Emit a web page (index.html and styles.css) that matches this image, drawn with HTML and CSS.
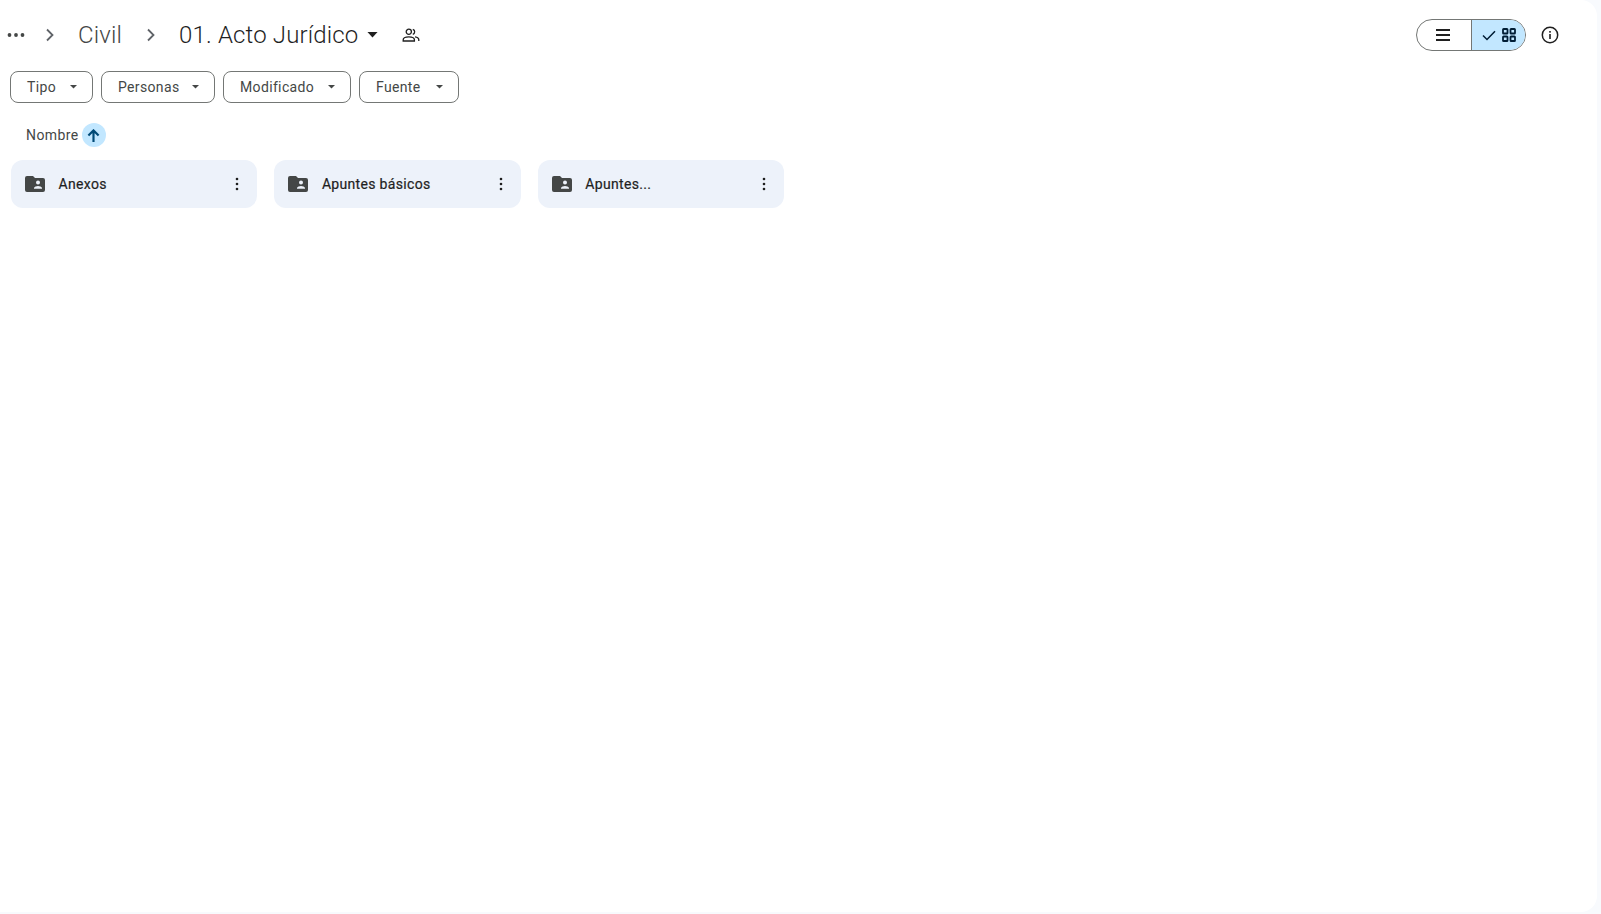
FILE: index.html
```html
<!DOCTYPE html>
<html lang="es">
<head>
<meta charset="utf-8">
<title>01. Acto Jurídico</title>
<link rel="stylesheet" href="styles.css">
</head>
<body>
<main class="panel">
  <header class="topbar">
    <nav class="crumbs">
      <svg class="more" viewBox="0 0 18 4" width="18" height="4"><circle cx="2.5" cy="2" r="1.9"/><circle cx="9" cy="2" r="1.9"/><circle cx="15.5" cy="2" r="1.9"/></svg>
      <svg class="chev chev-a" viewBox="0 0 10 14" width="10" height="14"><path d="M2 1.5 7.5 7 2 12.5"/></svg>
      <span class="crumb">Civil</span>
      <svg class="chev chev-b" viewBox="0 0 10 14" width="10" height="14"><path d="M2 1.5 7.5 7 2 12.5"/></svg>
      <span class="crumb current">01. Acto Jurídico</span>
      <svg class="caret-big" viewBox="0 0 12 6" width="11" height="5.500"><path d="M0.5 0h11L6 6z"/></svg>
      <svg class="people" viewBox="0 0 18 14" width="18" height="14"><circle cx="6.8" cy="3.8" r="2.6"/><path d="M1.2 13v-1.3c0-1.7 2.4-2.9 5.6-2.9s5.6 1.200 5.600 2.900V13z"/><path d="M10.800 1.300a2.600 2.600 0 0 1 0 5"/><path d="M13 8.900c2.300.4 3.800 1.400 3.800 2.800V13"/></svg>
    </nav>
    <div class="actions">
      <div class="toggle">
        <span class="seg seg-list">
          <svg viewBox="0 0 14 12" width="14" height="12"><path d="M0 1h14M0 6h14M0 11h14"/></svg>
        </span>
        <span class="seg seg-grid">
          <svg class="check" viewBox="0 0 14 11" width="14" height="11"><path d="M1 5.500 5 9.500 13 1.200"/></svg>
          <svg class="grid" viewBox="0 0 14 14" width="14" height="14"><rect x="1" y="1" width="4.500" height="4.500" rx=".6"/><rect x="8.500" y="1" width="4.500" height="4.500" rx=".6"/><rect x="1" y="8.500" width="4.500" height="4.500" rx=".6"/><rect x="8.500" y="8.500" width="4.500" height="4.500" rx=".6"/></svg>
        </span>
      </div>
      <svg class="info" viewBox="0 0 18 18" width="18" height="18"><circle class="ring" cx="9" cy="9" r="7.700"/><rect class="dot" x="8.200" y="8" width="1.600" height="5"/><rect class="dot" x="8.200" y="5" width="1.600" height="1.700"/></svg>
    </div>
  </header>

  <div class="filters">
    <button class="chip chip-tipo">Tipo<svg viewBox="0 0 8 4" width="7" height="3.500"><path d="M0 0h8L4 4z"/></svg></button>
    <button class="chip chip-personas">Personas<svg viewBox="0 0 8 4" width="7" height="3.500"><path d="M0 0h8L4 4z"/></svg></button>
    <button class="chip chip-modificado">Modificado<svg viewBox="0 0 8 4" width="7" height="3.500"><path d="M0 0h8L4 4z"/></svg></button>
    <button class="chip chip-fuente">Fuente<svg viewBox="0 0 8 4" width="7" height="3.500"><path d="M0 0h8L4 4z"/></svg></button>
  </div>

  <div class="sort">
    <span>Nombre</span>
    <span class="sort-btn"><svg viewBox="0 0 12 12" width="13" height="13"><path d="M6 12V1.500M1.300 6 6 1.300 10.700 6"/></svg></span>
  </div>

  <section class="cards">
    <article class="card">
      <svg class="folder" viewBox="0 0 20 16" width="20" height="16"><path fill-rule="evenodd" d="M2 0h6l2 2h8a2 2 0 0 1 2 2v10a2 2 0 0 1-2 2H2a2 2 0 0 1-2-2V2a2 2 0 0 1 2-2zm11 4.500a2 2 0 1 0 0 4 2 2 0 0 0 0-4zM9 12.800h8v-.9c0-1.300-2.700-2-4-2s-4 .7-4 2z"/></svg>
      <span class="name">Anexos</span>
      <svg class="kebab" viewBox="0 0 4 14" width="4" height="14"><circle cx="2" cy="2" r="1.300"/><circle cx="2" cy="7" r="1.300"/><circle cx="2" cy="12" r="1.300"/></svg>
    </article>
    <article class="card">
      <svg class="folder" viewBox="0 0 20 16" width="20" height="16"><path fill-rule="evenodd" d="M2 0h6l2 2h8a2 2 0 0 1 2 2v10a2 2 0 0 1-2 2H2a2 2 0 0 1-2-2V2a2 2 0 0 1 2-2zm11 4.500a2 2 0 1 0 0 4 2 2 0 0 0 0-4zM9 12.800h8v-.9c0-1.300-2.700-2-4-2s-4 .7-4 2z"/></svg>
      <span class="name">Apuntes básicos</span>
      <svg class="kebab" viewBox="0 0 4 14" width="4" height="14"><circle cx="2" cy="2" r="1.300"/><circle cx="2" cy="7" r="1.300"/><circle cx="2" cy="12" r="1.300"/></svg>
    </article>
    <article class="card">
      <svg class="folder" viewBox="0 0 20 16" width="20" height="16"><path fill-rule="evenodd" d="M2 0h6l2 2h8a2 2 0 0 1 2 2v10a2 2 0 0 1-2 2H2a2 2 0 0 1-2-2V2a2 2 0 0 1 2-2zm11 4.500a2 2 0 1 0 0 4 2 2 0 0 0 0-4zM9 12.800h8v-.9c0-1.300-2.700-2-4-2s-4 .7-4 2z"/></svg>
      <span class="name">Apuntes...</span>
      <svg class="kebab" viewBox="0 0 4 14" width="4" height="14"><circle cx="2" cy="2" r="1.300"/><circle cx="2" cy="7" r="1.300"/><circle cx="2" cy="12" r="1.300"/></svg>
    </article>
  </section>
</main>
</body>
</html>
```
FILE: styles.css
```css
* { box-sizing: border-box; }
html, body { margin: 0; height: 100%; overflow: hidden; }
body {
  background: #f8fafd;
  font-family: Roboto, "Liberation Sans", sans-serif;
  color: #1f1f1f;
}
.panel {
  width: 1597px;
  height: 912px;
  background: #fff;
  border-radius: 0 16px 16px 0;
  padding: 19px 0 0 10px;
}
.topbar {
  display: flex;
  align-items: center;
  justify-content: space-between;
  height: 32px;
  padding-right: 38px;
}
.crumbs { display: flex; align-items: center; margin-left: -3px; }
.more { fill: #444746; }
.chev { fill: none; stroke: #5f6368; stroke-width: 1.800; }
.chev-a { margin-left: 20px; }
.chev-b { margin-left: 24px; }
.crumb {
  font-size: 24px;
  font-weight: 300;
  line-height: 32px;
  letter-spacing: 0.15px;
  color: #444746;
}
.crumbs .crumb { margin-left: 23px; }
.crumbs .current { color: #1f1f1f; margin-left: 23px; }
.caret-big { margin-left: 9px; fill: #1f1f1f; }
.people { margin-left: 24px; fill: none; stroke: #1f1f1f; stroke-width: 1.300; }
.actions { display: flex; align-items: center; gap: 15px; }
.toggle {
  display: flex;
  width: 110px;
  height: 32px;
  border: 1px solid #747775;
  border-radius: 16px;
  overflow: hidden;
}
.seg { display: flex; align-items: center; justify-content: center; }
.seg-list { width: 54px; padding-right: 2px; }
.seg-list svg { fill: none; stroke: #1f1f1f; stroke-width: 1.800; }
.seg-grid {
  flex: 1;
  gap: 6px;
  background: #c2e7ff;
  border-left: 1px solid #747775;
}
.check { fill: none; stroke: #001d35; stroke-width: 1.500; }
.grid { fill: none; stroke: #001d35; stroke-width: 1.800; }
.info .ring { fill: none; stroke: #1f1f1f; stroke-width: 1.500; }
.info .dot { fill: #1f1f1f; }
.filters { display: flex; gap: 8px; margin-top: 20px; }
.chip {
  display: flex;
  align-items: center;
  justify-content: space-between;
  height: 32px;
  padding: 0 15px 0 16px;
  background: #fff;
  border: 1px solid #747775;
  border-radius: 8px;
  font: 400 14px Roboto, "Liberation Sans", sans-serif;
  letter-spacing: 0.35px;
  color: #444746;
}
.chip svg { fill: #444746; }
.chip-tipo { width: 83px; }
.chip-personas { width: 114px; }
.chip-modificado { width: 128px; }
.chip-fuente { width: 100px; }
.sort {
  display: flex;
  align-items: center;
  gap: 3px;
  height: 24px;
  margin: 20px 0 0 16px;
  font-size: 14px;
  letter-spacing: 0.4px;
  color: #444746;
}
.sort-btn {
  display: flex;
  align-items: center;
  justify-content: center;
  width: 24px;
  height: 24px;
  border-radius: 50%;
  background: #c2e7ff;
}
.sort-btn svg { fill: none; stroke: #004a77; stroke-width: 2; }
.cards { display: flex; gap: 17px; margin: 13px 0 0 1px; }
.card {
  display: flex;
  align-items: center;
  width: 246.400px;
  height: 48px;
  padding: 0 18px 0 14px;
  background: #edf2fa;
  border-radius: 12px;
}
.folder { fill: #444746; flex: none; }
.name {
  flex: 1;
  margin-left: 13.500px;
  font-size: 14px;
  font-weight: 400;
  letter-spacing: 0.32px;
  color: #1f1f1f;
  -webkit-text-stroke: 0.2px #1f1f1f;
}
.kebab { fill: #1f1f1f; flex: none; }
```
